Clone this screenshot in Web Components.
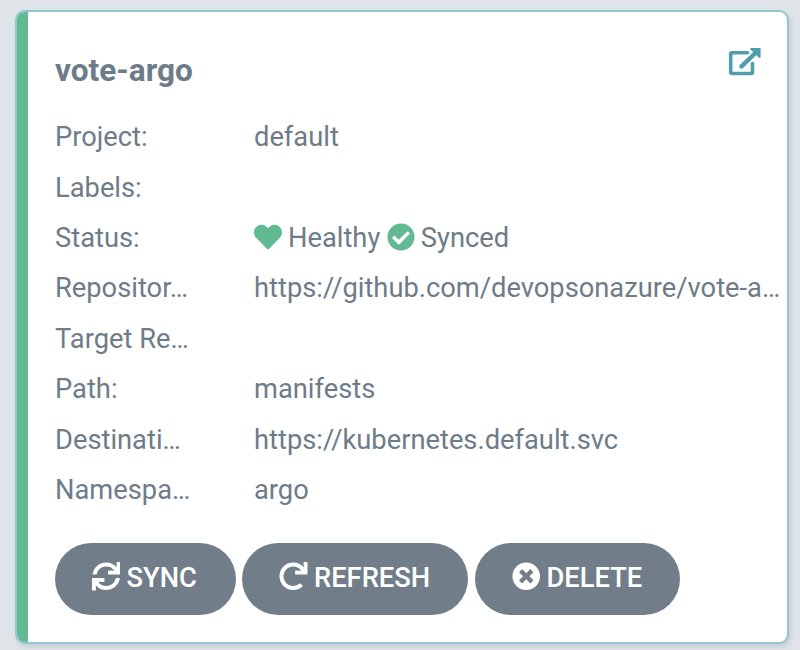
<!DOCTYPE html>
<html lang="en">
<head>
<meta charset="utf-8">
<title>Applications</title>
<style>
html,body{margin:0;height:100%;overflow:hidden}
body{background:#dfe4e8;font-family:Roboto,sans-serif;color:#6d7c88}
</style>
</head>
<body>
<app-card name="vote-argo">
  <app-row slot="rows" label="Project:">default</app-row>
  <app-row slot="rows" label="Labels:"></app-row>
  <app-row slot="rows" label="Status:"><app-status icon="heart">Healthy</app-status><app-status icon="check">Synced</app-status></app-row>
  <app-row slot="rows" label="Repositor…">https://github.com/devopsonazure/vote-a…</app-row>
  <app-row slot="rows" label="Target Re…"></app-row>
  <app-row slot="rows" label="Path:">manifests</app-row>
  <app-row slot="rows" label="Destinati…">https://kubernetes.default.svc</app-row>
  <app-row slot="rows" label="Namespa…">argo</app-row>
  <app-button slot="actions" icon="sync" style="width:181px">SYNC</app-button>
  <app-button slot="actions" icon="redo" style="width:226px">REFRESH</app-button>
  <app-button slot="actions" icon="times" style="width:205px">DELETE</app-button>
</app-card>
<script>
const ICONS = {
  redo: '<path d="M500.33 0h-47.41a12 12 0 0 0-12 12.57l4 82.76A247.42 247.42 0 0 0 256 8C119.34 8 7.9 119.53 8 256.19 8.1 393.07 119.1 504 256 504a247.1 247.1 0 0 0 166.18-63.91 12 12 0 0 0 .48-17.43l-34-34a12 12 0 0 0-16.38-.55A176 176 0 1 1 402.1 157.8l-101.53-4.87a12 12 0 0 0-12.57 12v47.41a12 12 0 0 0 12 12h200.33a12 12 0 0 0 12-12V12a12 12 0 0 0-12-12z"/>',
  sync: '<path d="M440.65 12.57l4 82.77A247.16 247.16 0 0 0 255.83 8C134.73 8 33.91 94.92 12.29 209.82A12 12 0 0 0 24.09 224h49.05a12 12 0 0 0 11.67-9.26 175.91 175.91 0 0 1 317-56.94l-101.46-4.86a12 12 0 0 0-12.57 12v47.41a12 12 0 0 0 12 12H500a12 12 0 0 0 12-12V12a12 12 0 0 0-12-12h-47.37a12 12 0 0 0-11.98 12.57zM255.83 432a175.61 175.61 0 0 1-146-77.8l101.8 4.87a12 12 0 0 0 12.57-12v-47.4a12 12 0 0 0-12-12H12a12 12 0 0 0-12 12V500a12 12 0 0 0 12 12h47.35a12 12 0 0 0 12-12.6l-4.15-82.57A247.17 247.17 0 0 0 255.83 504c121.11 0 221.93-86.92 243.55-201.82a12 12 0 0 0-11.8-14.18h-49.05a12 12 0 0 0-11.67 9.26A175.86 175.86 0 0 1 255.83 432z"/>',
  heart: '<path d="M462.3 62.6C407.5 15.9 326 24.3 275.7 76.2L256 96.5l-19.7-20.3C186.1 24.3 104.5 15.9 49.7 62.6c-62.8 53.6-66.1 149.8-9.9 207.9l193.5 199.8c12.5 12.9 32.8 12.9 45.3 0l193.5-199.8c56.3-58.1 53-154.3-9.8-207.9z"/>',
  check: '<path d="M504 256c0 136.967-111.033 248-248 248S8 392.967 8 256 119.033 8 256 8s248 111.033 248 248zM227.314 387.314l184-184c6.248-6.248 6.248-16.379 0-22.627l-22.627-22.627c-6.248-6.249-16.379-6.249-22.628 0L216 308.118l-70.059-70.059c-6.248-6.248-16.379-6.248-22.628 0l-22.627 22.627c-6.248 6.248-6.248 16.379 0 22.627l104 104c6.249 6.249 16.379 6.249 22.628.001z"/>',
  times: '<path d="M256 8C119 8 8 119 8 256s111 248 248 248 248-111 248-248S393 8 256 8zm121.6 313.1c4.7 4.7 4.7 12.3 0 17L338 377.6c-4.7 4.7-12.3 4.7-17 0L256 312l-65.1 65.6c-4.7 4.7-12.3 4.7-17 0L134.4 338c-4.7-4.7-4.7-12.3 0-17l65.6-65-65.6-65.1c-4.7-4.7-4.7-12.3 0-17l39.6-39.6c4.7-4.7 12.3-4.7 17 0l65 65.7 65.1-65.6c4.7-4.7 12.3-4.7 17 0l39.6 39.6c4.7 4.7 4.7 12.3 0 17L312 256l65.6 65.1z"/>'
};
const svg = n => `<svg viewBox="0 0 512 512" aria-hidden="true">${ICONS[n]}</svg>`;
const define = (tag, render) => customElements.define(tag, class extends HTMLElement {
  constructor() {
    super();
    this.attachShadow({ mode: 'open' }).innerHTML = render(this);
  }
});

define('app-status', el => `<style>
:host{display:inline-flex;align-items:center;margin-right:6.5px}
svg{width:28px;height:28px;fill:#62ba94;margin-right:6px;position:relative;top:-1.5px}
</style>${svg(el.getAttribute('icon'))}<span><slot></slot></span>`);

define('app-row', el => `<style>
:host{display:grid;grid-template-columns:199px 1fr;height:50.4px;line-height:50.4px;font-size:27.3px;white-space:nowrap}
.value{display:flex}
</style><span>${el.getAttribute('label')}</span><span class="value"><slot></slot></span>`);

define('app-button', el => `<style>
:host{display:flex;align-items:center;box-sizing:border-box;height:72px;padding:0 0 3px 37px;border-radius:36px;
background:#717e89;color:#fff;font-size:27.3px;font-weight:500;white-space:nowrap}
svg{width:28.5px;height:28.5px;fill:currentColor;margin-right:6.5px;flex:none;position:relative;top:-1.5px}
</style>${svg(el.getAttribute('icon'))}<span><slot></slot></span>`);

define('app-card', el => `<style>
:host{display:block;box-sizing:border-box;height:650px;padding:10px 11.5px 6px 15px}
.card{box-sizing:border-box;height:633.5px;background:#fff;border:2px solid #93c6d2;border-radius:10px;
box-shadow:2px 3px 5px #c5ccd3;display:flex;overflow:hidden}
.bar{width:11px;background:#62ba94;flex:none}
.body{flex:1;padding:33px 0 0 27px;min-width:0}
header{display:flex;justify-content:space-between;height:67.2px}
h1{margin:0;font-size:31.6px;line-height:52px;font-weight:700}
header svg{width:34px;height:30px;margin:2px 25px 0 0;fill:none;stroke:#519dad}
.actions{display:flex;gap:6.5px;margin:28px 0 0 -.5px}
</style><div class="card"><div class="bar"></div><div class="body">
<header><h1>${el.getAttribute('name')}</h1>
<svg viewBox="0 0 34 30" aria-hidden="true"><path d="M19.5 5.8H4.2Q2.7 5.8 2.7 7.3V25Q2.7 26.5 4.2 26.5H23Q24.5 26.5 24.5 25V16.5" stroke-width="3.6" stroke-linecap="round"/><path d="M13.5 19.4 29 4.5" stroke-width="4.4" stroke-linecap="round"/><path d="M23 1.8H31.8V10.3Z" fill="#519dad" stroke-width="1.6" stroke-linejoin="round"/></svg></header>
<slot name="rows"></slot><div class="actions"><slot name="actions"></slot></div></div></div>`);
</script>
</body>
</html>
